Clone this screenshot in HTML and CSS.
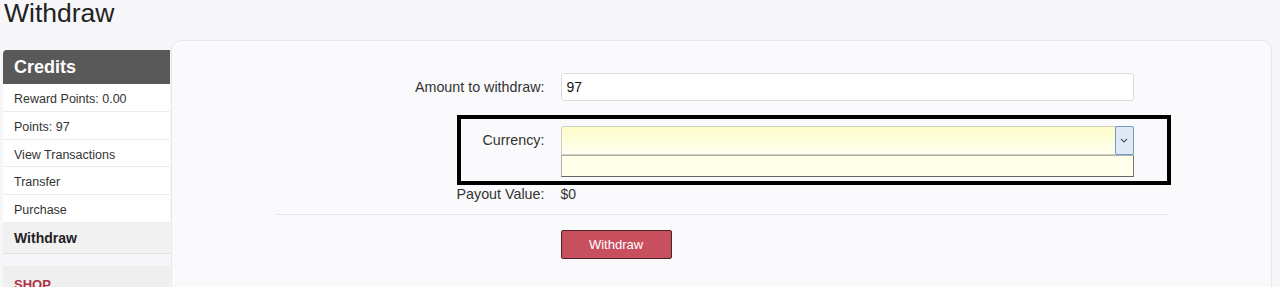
FILE: index.html
```html
<!DOCTYPE html>
<html>
<head>
<meta charset="utf-8">
<title>Withdraw</title>
<link rel="stylesheet" href="styles.css">
</head>
<body>
<h1 class="title">Withdraw</h1>
<div class="layout">
  <aside class="sidebar">
    <div class="side-head">Credits</div>
    <ul class="side-list">
      <li>Reward Points: 0.00</li>
      <li>Points: 97</li>
      <li class="short">View Transactions</li>
      <li>Transfer</li>
      <li>Purchase</li>
      <li class="active">Withdraw</li>
    </ul>
    <div class="side-shop">SHOP</div>
  </aside>
  <main class="panel">
    <form class="form">
      <div class="row row-amount">
        <label class="lbl">Amount to withdraw:</label>
        <div class="input">97</div>
      </div>
      <div class="row row-currency">
        <label class="lbl lbl-top">Currency:</label>
        <div class="select-wrap">
          <div class="select">
            <span class="select-btn">
              <svg width="8" height="5" viewBox="0 0 8 5"><path d="M1 1 L4 4 L7 1" fill="none" stroke="#555" stroke-width="1.2"/></svg>
            </span>
          </div>
          <div class="select-list"></div>
        </div>
        <div class="highlight"></div>
      </div>
      <div class="row row-payout">
        <span class="lbl">Payout Value:</span>
        <span class="value">$0</span>
      </div>
      <div class="divider"></div>
      <div class="row row-btn">
        <span></span>
        <button type="button" class="btn">Withdraw</button>
      </div>
    </form>
  </main>
</div>
</body>
</html>
```
FILE: styles.css
```css
* { box-sizing: border-box; }
html, body { margin: 0; padding: 0; }
body {
  background: #f7f7fa;
  font-family: "Liberation Sans", Arial, sans-serif;
  color: #333;
  overflow: hidden;
  height: 287px;
}
.title {
  margin: 0;
  padding-left: 4px;
  font-size: 26.5px;
  line-height: 26px;
  font-weight: normal;
  color: #222;
}
.layout {
  display: flex;
  gap: 1px;
  padding-left: 3px;
  padding-right: 8px;
  margin-top: 14px;
}
.sidebar {
  width: 167px;
  flex: none;
  margin-top: 10px;
}
.side-head {
  height: 34px;
  background: #595959;
  color: #fff;
  font-weight: bold;
  font-size: 18px;
  line-height: 34px;
  padding-left: 11px;
  border-radius: 4px 0 0 0;
}
.side-list {
  list-style: none;
  margin: 0;
  padding: 0;
  background: #fff;
}
.side-list li {
  height: 28px;
  line-height: 27px;
  padding-top: 2px;
  padding-left: 11px;
  font-size: 12.5px;
  color: #333;
  border-bottom: 1px solid #ececef;
}
.side-list li.short { height: 27px; line-height: 26px; }
.side-list li.active {
  height: 31px;
  line-height: 30px;
  padding-top: 0;
  background: #f1f1f1;
  font-weight: bold;
  font-size: 14px;
  color: #222;
  border-bottom: 1px solid #e2e2e2;
}
.side-shop {
  margin-top: 12px;
  height: 40px;
  background: #efeff0;
  padding-left: 11px;
  padding-top: 11px;
  font-size: 13px;
  font-weight: bold;
  color: #b0303f;
}
.panel {
  flex: 1;
  height: 270px;
  background: #fafafc;
  border: 1px solid #e8e8ec;
  border-radius: 10px;
  padding-top: 32px;
}
.form {
  width: 892px;
  margin: 0 auto;
}
.row {
  display: grid;
  grid-template-columns: 267px 573px;
  column-gap: 18px;
  align-items: center;
}
.lbl {
  text-align: right;
  font-size: 14.3px;
  color: #333;
  margin-right: -2px;
}
.row-amount { height: 28px; margin-bottom: 25px; }
.input {
  height: 28px;
  background: #fff;
  border: 1px solid #dcdcdf;
  border-radius: 3px;
  font-size: 14px;
  line-height: 26px;
  padding-left: 5px;
  color: #111;
}
.row-currency {
  position: relative;
  height: 51px;
  align-items: start;
  margin-bottom: 7px;
}
.lbl-top { line-height: 29px; }
.select {
  position: relative;
  height: 29px;
  background: linear-gradient(to bottom, #fdfdc9, #fffff0);
  border: 1px solid #cfcfc0;
  border-radius: 3px 3px 0 0;
}
.select-btn {
  position: absolute;
  right: -1px;
  top: -1px;
  width: 19px;
  height: 29px;
  background: #dfeaf6;
  border: 1px solid #6e9dcb;
  border-radius: 2px;
  display: flex;
  align-items: center;
  justify-content: center;
}
.select-list {
  height: 22px;
  background: #ffffea;
  border: 1px solid #b0b0a8;
  border-right-color: #777;
  border-bottom-color: #666;
}
.highlight {
  position: absolute;
  left: 181px;
  top: -11px;
  width: 714px;
  height: 70px;
  border: 4px solid #000;
  pointer-events: none;
}
.row-payout {
  height: 20px;
  line-height: 20px;
}
.value { font-size: 14px; color: #333; }
.divider {
  margin-top: 10px;
  border-top: 1px solid #e4e4e8;
}
.row-btn { margin-top: 15px; }
.btn {
  width: 111px;
  height: 29px;
  background: #c8505e;
  border: 1px solid #4d2326;
  border-radius: 2px;
  color: #fff;
  font-family: "Liberation Sans", Arial, sans-serif;
  font-size: 13px;
  padding: 0;
}
```
